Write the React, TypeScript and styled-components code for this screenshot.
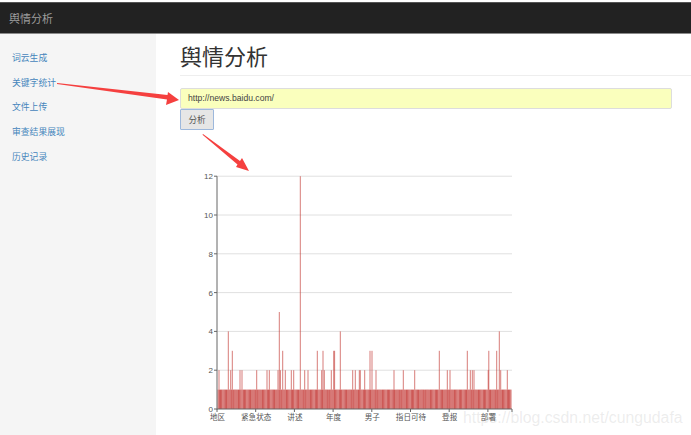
import styled, { createGlobalStyle } from "styled-components";

const GlobalStyle = createGlobalStyle`
  html, body {
    margin: 0;
    padding: 0;
    background: #fff;
    overflow: hidden;
  }
  body {
    font-family: "Liberation Sans", "Noto Sans CJK SC", sans-serif;
    font-size: 9px;
    color: #333;
  }
`;

const Page = styled.div`
  position: relative;
  width: 691px;
  height: 435px;
  padding-top: 2px;
  box-sizing: border-box;
  display: flex;
  flex-direction: column;
  overflow: hidden;
`;

const Navbar = styled.header`
  flex: none;
  height: 32px;
  box-sizing: border-box;
  background: #222;
  border-top: 1px solid #555;
  border-bottom: 1px solid #8a8a8a;
  display: flex;
  align-items: center;
  padding-left: 9px;
`;

const Brand = styled.span`
  color: #9d9d9d;
  font-size: 11px;
`;

const Body = styled.div`
  flex: 1;
  display: flex;
  min-height: 0;
`;

const Sidebar = styled.nav`
  flex: none;
  width: 156px;
  background: #f5f5f5;
  padding-top: 12px;
  box-sizing: border-box;
  display: flex;
  flex-direction: column;
`;

const NavLink = styled.a`
  height: 24.7px;
  line-height: 24.7px;
  padding-left: 12px;
  color: #4585bc;
  font-size: 8.8px;
  text-decoration: none;
`;

const Main = styled.main`
  flex: 1;
  padding: 0 19px 0 24px;
  min-width: 0;
`;

const Title = styled.h1`
  margin: 0 -19px 12px 0;
  height: 41px;
  line-height: 47px;
  font-size: 22px;
  font-weight: 400;
  color: #333;
  border-bottom: 1px solid #eee;
`;

const UrlInput = styled.div`
  height: 21px;
  box-sizing: border-box;
  background: #faffbd;
  border: 1px solid #ddd;
  border-radius: 2px;
  padding-left: 7px;
  line-height: 19px;
  color: #444;
  font-size: 8.6px;
`;

const AnalyzeButton = styled.button`
  display: block;
  width: 34px;
  height: 21px;
  padding: 0 0 2px;
  background: #e6e6e6;
  border: 1px solid #9db8dc;
  border-radius: 1px;
  color: #555;
  font-family: inherit;
  font-size: 8.6px;
`;

const ChartWrap = styled.div`
  margin-top: 35px;
  width: 340px;
  height: 265px;
`;

const ChartSvg = styled.svg`
  display: block;
`;

const Overlay = styled.svg`
  position: absolute;
  left: 0;
  top: 0;
  pointer-events: none;
`;

const Watermark = styled.span`
  position: absolute;
  left: 463px;
  top: 409px;
  color: rgba(170, 170, 170, 0.22);
  font-size: 15.8px;
  white-space: nowrap;
`;

const links = ["词云生成", "关键字统计", "文件上传", "审查结果展现", "历史记录"];

// chart-local coordinates: page x - 180, page y - 165
const X0 = 37;
const X1 = 332;
const Y0 = 244;
const UNIT = 19.4;

const yTicks = [0, 2, 4, 6, 8, 10, 12];
const xLabels = ["地区", "紧急状态", "讲述", "年度", "男子", "指日可待", "登报", "部署"];

// [page x, value] for every spike that rises above the base row
const spikes: [number, number][] = [
  [219, 2], [228.3, 4], [230.7, 2], [232.3, 3], [240, 2], [242, 2], [256.7, 2],
  [267, 2], [269.3, 2], [278, 2], [279.3, 5], [280.4, 2], [282.7, 3], [285.3, 2],
  [291.3, 2], [293.7, 2], [300.3, 12], [304.7, 2], [308, 2], [317.3, 3], [321.7, 2],
  [323, 3], [324.3, 2], [331.3, 2], [333.7, 3], [334.6, 3], [340.3, 4], [352.7, 2],
  [355.3, 2], [359.3, 2], [360.3, 2], [364.7, 2], [370, 3], [372, 3], [376, 2],
  [394, 2], [403.3, 2], [414.7, 2], [439.3, 3], [447.3, 2], [450, 2], [467.3, 3],
  [470.3, 2], [472.3, 2], [474, 2], [488.2, 2], [488.8, 3], [496.7, 3], [499.3, 4],
  [500.7, 2], [507.3, 2],
];

const baseBars = Array.from({ length: 245 }, (_, i) => X0 + 0.5 + i * 1.2);

const Chart = () => (
  <ChartSvg width={340} height={265} viewBox="0 0 340 265">
    {yTicks.map((t) => {
      const y = Y0 - t * UNIT;
      return (
        <g key={t}>
          {t > 0 && <line x1={X0} x2={X1} y1={y} y2={y} stroke="#e0e0e0" strokeWidth={1} />}
          <line x1={X0 - 3} x2={X0} y1={y} y2={y} stroke="#666" strokeWidth={1} />
          <text x={X0 - 4} y={y + 3} textAnchor="end" fontSize={8} fill="#555">
            {t}
          </text>
        </g>
      );
    })}
    {baseBars.map((x, i) => (
      <rect
        key={i}
        x={x}
        y={Y0 - UNIT}
        width={1.2}
        height={UNIT}
        fill="#c23531"
        opacity={i % 4 === 0 ? 0.7 : 0.82}
      />
    ))}
    {spikes.map(([px, v]) => (
      <rect
        key={px}
        x={px - 180 - 0.5}
        y={Y0 - v * UNIT}
        width={1}
        height={(v - 1) * UNIT}
        fill="#c23531"
        opacity={0.65}
      />
    ))}
    <line x1={X0} x2={X0} y1={Y0 - 12 * UNIT} y2={Y0 + 0.5} stroke="#666" strokeWidth={1} />
    <line x1={X0} x2={X1} y1={Y0} y2={Y0} stroke="#666" strokeWidth={1} />
    {xLabels.map((label, i) => {
      const x = X0 + i * 38.7;
      return (
        <g key={label}>
          <line x1={x} x2={x} y1={Y0} y2={Y0 + 3} stroke="#666" strokeWidth={1} />
          <text x={x + 0.5} y={Y0 + 11} textAnchor="middle" fontSize={7.6} fill="#555">
            {label}
          </text>
        </g>
      );
    })}
    <line x1={X1} x2={X1} y1={Y0} y2={Y0 + 3} stroke="#666" strokeWidth={1} />
  </ChartSvg>
);

const App = () => (
  <>
    <GlobalStyle />
    <Page>
      <Navbar>
        <Brand>舆情分析</Brand>
      </Navbar>
      <Body>
        <Sidebar>
          {links.map((l) => (
            <NavLink key={l} href="#">
              {l}
            </NavLink>
          ))}
        </Sidebar>
        <Main>
          <Title>舆情分析</Title>
          <UrlInput>http://news.baidu.com/</UrlInput>
          <AnalyzeButton>分析</AnalyzeButton>
          <ChartWrap>
            <Chart />
          </ChartWrap>
        </Main>
      </Body>
      <Overlay width={691} height={435} viewBox="0 0 691 435">
        <polygon points="57,83 57,84 167,99.5 166,105 179,100 168,92 167.5,95" fill="#f5403f" />
        <polygon points="203,134 202.5,134.8 237.5,164.5 236,167 249,171 242,158 240,161" fill="#f5403f" />
      </Overlay>
      <Watermark>https://blog.csdn.net/cungudafa</Watermark>
    </Page>
  </>
);

export default App;
